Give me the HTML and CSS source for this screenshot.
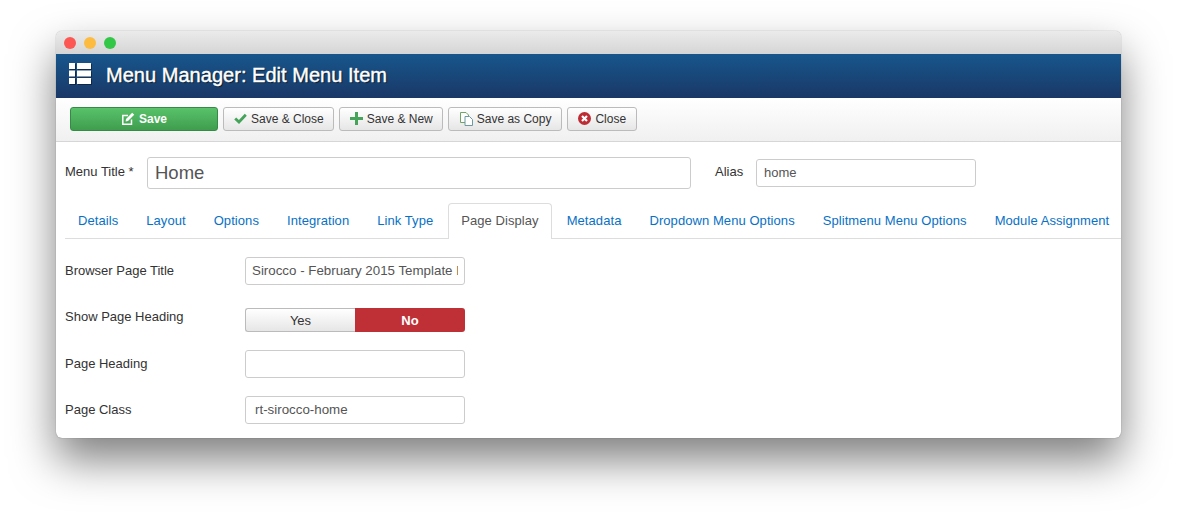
FILE: index.html
```html
<!DOCTYPE html>
<html lang="en">
<head>
    <meta charset="UTF-8">
    <meta name="viewport" content="width=device-width, initial-scale=1.0">
    <title>Menu Manager: Edit Menu Item</title>
    <link rel="stylesheet" href="styles.css">
</head>
<body>
    <div class="window">
        <div class="titlebar">
            <span class="light light-red"></span>
            <span class="light light-yellow"></span>
            <span class="light light-green"></span>
        </div>

        <header class="page-header">
            <svg class="header-icon" width="22" height="21" viewBox="0 0 22 21">
                <path fill="#fff" d="M0 0h6v6H0zM8 0h14v6H8zM0 7.500h6v6H0zM8 7.500h14v6H8zM0 15h6v6H0zM8 15h14v6H8z"/>
            </svg>
            <h1>Menu Manager: Edit Menu Item</h1>
        </header>

        <div class="toolbar">
            <button class="btn btn-save">
                <svg width="13" height="13" viewBox="0 0 13 13">
                    <path fill="none" stroke="#fff" stroke-width="1.500" d="M9.500 7.500v4.700H.8V3.500H6"/>
                    <path fill="#fff" d="M4 7 10.200.8l2 2L6 9l-2.400.4z"/>
                </svg>
                Save
            </button>
            <button class="btn">
                <svg width="13" height="13" viewBox="0 0 13 13">
                    <path fill="none" stroke="#45a45a" stroke-width="2.800" d="M1.200 6.400 5 10 11.800 2.800"/>
                </svg>
                Save &amp; Close
            </button>
            <button class="btn">
                <svg width="13" height="13" viewBox="0 0 13 13">
                    <path fill="#45a45a" d="M5 0h3v5h5v3H8v5H5V8H0V5h5z"/>
                </svg>
                Save &amp; New
            </button>
            <button class="btn btn-wide">
                <svg width="14" height="14" viewBox="0 0 14 14">
                    <path fill="#fff" stroke="#6fa565" d="M1.500.500h5.500l2.500 2.500v7.500h-8z"/>
                    <path fill="#fff" stroke="#6d9aa0" d="M6 4.500h4.500l3 3v6H6z"/>
                </svg>
                Save as Copy
            </button>
            <button class="btn btn-wide">
                <svg width="13" height="13" viewBox="0 0 13 13">
                    <circle cx="6.500" cy="6.500" r="6.500" fill="#bd2c34"/>
                    <path stroke="#fff" stroke-width="2.200" d="M4 4l5 5M9 4l-5 5"/>
                </svg>
                Close
            </button>
        </div>

        <div class="content">
            <div class="title-row">
                <label class="title-label">Menu Title *</label>
                <input class="input input-title" type="text" value="Home">
                <label class="alias-label">Alias</label>
                <input class="input input-alias" type="text" value="home">
            </div>

            <ul class="tabs">
                <li><a href="#">Details</a></li>
                <li><a href="#">Layout</a></li>
                <li><a href="#">Options</a></li>
                <li><a href="#">Integration</a></li>
                <li><a href="#">Link Type</a></li>
                <li class="active"><a href="#">Page Display</a></li>
                <li><a href="#">Metadata</a></li>
                <li><a href="#">Dropdown Menu Options</a></li>
                <li><a href="#">Splitmenu Menu Options</a></li>
                <li><a href="#">Module Assignment</a></li>
            </ul>

            <div class="form-row row-browser">
                <label>Browser Page Title</label>
                <input class="input input-field input-tight" type="text" value="Sirocco - February 2015 Template Demo">
            </div>
            <div class="form-row row-heading">
                <label>Show Page Heading</label>
                <div class="switch">
                    <span class="switch-yes">Yes</span>
                    <span class="switch-no">No</span>
                </div>
            </div>
            <div class="form-row row-pagehead">
                <label>Page Heading</label>
                <input class="input input-field" type="text">
            </div>
            <div class="form-row row-class">
                <label>Page Class</label>
                <input class="input input-field" type="text" value="rt-sirocco-home">
            </div>
        </div>
    </div>
</body>
</html>
```

FILE: styles.css
```css
html, body {
    height: 100%;
}

body {
    margin: 0;
    padding: 31px 0 0 56px;
    box-sizing: border-box;
    overflow: hidden;
    background-color: #fff;
    font-family: 'Liberation Sans', Arial, sans-serif;
    font-size: 13px;
    color: #333;
}

.window {
    width: 1065px;
    height: 407px;
    border-radius: 6px;
    overflow: hidden;
    background-color: #fff;
    box-shadow: 0 22px 44px rgba(0, 0, 0, 0.5), 0 0 1px rgba(0, 0, 0, 0.5);
}

.titlebar {
    height: 23px;
    display: flex;
    align-items: center;
    gap: 8px;
    padding: 1px 0 0 8px;
    box-sizing: border-box;
    background: linear-gradient(#ebebeb, #d5d5d5);
}

.light {
    width: 12px;
    height: 12px;
    border-radius: 50%;
}

.light-red {
    background-color: #fc5753;
}

.light-yellow {
    background-color: #fdbc40;
}

.light-green {
    background-color: #33c748;
}

.page-header {
    height: 44px;
    display: flex;
    align-items: center;
    padding-left: 13px;
    background: linear-gradient(#17568c, #1a3867);
}

.header-icon {
    margin-right: 15px;
    margin-top: -5px;
    filter: drop-shadow(1px 1px 0 rgba(0, 0, 0, 0.4));
}

.page-header h1 {
    margin: -2px 0 0;
    font-size: 20px;
    font-weight: normal;
    letter-spacing: 0.03px;
    color: #fff;
    text-shadow: 1px 1px 1px rgba(0, 0, 0, 0.7);
    -webkit-text-stroke: 0.4px #fff;
}

.toolbar {
    height: 44px;
    display: flex;
    align-items: center;
    gap: 5px;
    padding: 0 0 2px 14px;
    box-sizing: border-box;
    background: linear-gradient(#fff, #f0f0f0);
    border-bottom: 1px solid #d6d6d6;
}

.btn {
    height: 24px;
    display: flex;
    align-items: center;
    gap: 4px;
    padding: 0 9px 0 10px;
    font-family: inherit;
    font-size: 12px;
    color: #333;
    background: linear-gradient(#fff, #e6e6e6);
    border: 1px solid #bbb;
    border-radius: 3px;
}

.btn-save {
    width: 148px;
    justify-content: center;
    font-weight: bold;
    color: #fff;
    background: linear-gradient(#59c26a, #3f9d4e);
    border-color: #378a45;
}

.btn-wide {
    padding-right: 10px;
}

.content {
    padding: 14px 0 0 9px;
}

.title-row {
    display: flex;
    align-items: center;
    height: 33px;
}

.title-label {
    width: 82px;
    margin-top: -2px;
}

.alias-label {
    width: 41px;
    margin-left: 24px;
    margin-top: -2px;
}

.input {
    box-sizing: border-box;
    padding: 0 9px;
    font-family: inherit;
    color: #555;
    background-color: #fff;
    border: 1px solid #ccc;
    border-radius: 3px;
}

.input-title {
    width: 544px;
    height: 32px;
    padding: 0 7px;
    font-size: 18.500px;
}

.input-alias {
    width: 220px;
    height: 28px;
    padding: 0 7px;
    font-size: 13px;
}

.input-field {
    width: 220px;
    height: 28px;
    padding-bottom: 2px;
}

.input-tight {
    padding-left: 6px;
    padding-right: 6px;
}

.tabs {
    display: flex;
    list-style: none;
    margin: 14px 0 0;
    padding: 0;
    height: 35px;
    white-space: nowrap;
    letter-spacing: 0.07px;
    border-bottom: 1px solid #ddd;
}

.tabs li {
    margin-right: 2px;
}

.tabs a {
    display: block;
    height: 35px;
    box-sizing: border-box;
    padding: 9px 12px 0;
    border: 1px solid transparent;
    border-bottom: none;
    color: #0871c6;
    text-decoration: none;
}

.tabs .active a {
    height: 36px;
    color: #555;
    background-color: #fff;
    border-color: #ddd;
    border-radius: 4px 4px 0 0;
}

.form-row {
    display: flex;
    align-items: center;
}

.form-row label {
    width: 180px;
    margin-top: -2px;
}

.form-row.row-heading label {
    margin-top: -8px;
}

.row-browser {
    margin-top: 18px;
}

.row-heading {
    margin-top: 23px;
}

.row-pagehead {
    margin-top: 18px;
}

.row-class {
    margin-top: 18px;
}

.switch {
    display: flex;
    width: 220px;
    height: 24px;
    line-height: 25px;
    text-align: center;
}

.switch-yes {
    flex: 0 0 110px;
    box-sizing: border-box;
    background: linear-gradient(#fff, #e6e6e6);
    border: 1px solid #bbb;
    border-right: none;
    border-radius: 3px 0 0 3px;
    line-height: 23px;
}

.switch-no {
    flex: 0 0 110px;
    font-weight: bold;
    color: #fff;
    background-color: #bf3036;
    border-radius: 0 3px 3px 0;
}
```
